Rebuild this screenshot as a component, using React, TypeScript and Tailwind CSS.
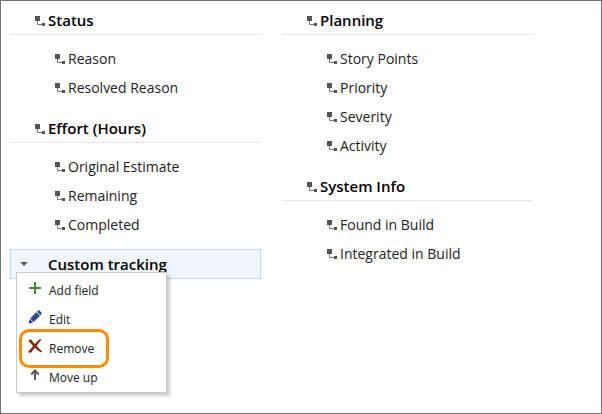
import React from "react";

function FieldIcon() {
  return (
    <svg width="10" height="10" viewBox="0 0 10 10" className="mt-px shrink-0" aria-hidden="true">
      <path d="M0 0h5v5H0z M7 7h3v3H7z" fill="#555555" />
      <path d="M2.5 5v3.500H7" fill="none" stroke="#777777" />
    </svg>
  );
}

function Group({ title, fields }: { title: string; fields: string[] }) {
  return (
    <section className="mb-3">
      <h2 className="flex h-7 items-center gap-[3px] border-b border-[#e6e6e6] pl-[25px] text-[15px] font-semibold text-black">
        <FieldIcon />
        {title}
      </h2>
      <ul className="pb-px pt-[9px]">
        {fields.map((field) => (
          <li key={field} className="flex h-[29px] items-center gap-[3px] pl-[45px] text-sm text-[#222222]">
            <FieldIcon />
            {field}
          </li>
        ))}
      </ul>
    </section>
  );
}

const addIcon = (
  <svg width="14" height="14" viewBox="0 0 14 14" aria-hidden="true">
    <path d="M7 1v12M1 7h12" stroke="#42852c" strokeWidth="2" />
  </svg>
);

const editIcon = (
  <svg width="14" height="14" viewBox="0 0 14 14" aria-hidden="true">
    <path d="M0.500 13.500L1.700 9l3.500 3.400z M2.200 8.400L8.400 2.200l3.600 3.600-6.300 6.100z M9 1.700l1.200-1.100q.7-.6 1.400 0l1.800 1.800q.6.700 0 1.400L12.500 5.200z" fill="#28479a" />
  </svg>
);

const removeIcon = (
  <svg width="14" height="14" viewBox="0 0 14 14" aria-hidden="true">
    <path d="M0.5 2Q1.500 0 3.300.700Q4.800 3 7 5Q9.300 2.200 12 0L13.400.700Q10.800 3.500 8.800 6.700Q10.800 9.500 14 12.200L12.900 13.500Q9.500 11.300 6.900 8.800Q4.800 11.200 3 13.700Q1.200 14 .100 12.700Q3 9.800 5 6.900Q3 4.600.500 2z" fill="#7e2a10" />
  </svg>
);

const moveUpIcon = (
  <svg width="14" height="14" viewBox="0 0 14 14" aria-hidden="true">
    <path d="M7 12V3M3.300 6.500L7 2.500l3.700 4" fill="none" stroke="#5c5c5c" strokeWidth="2" />
  </svg>
);

const actions = [
  { label: "Add field", icon: addIcon },
  { label: "Edit", icon: editIcon },
  { label: "Remove", icon: removeIcon, marked: true },
  { label: "Move up", icon: moveUpIcon },
];

function ContextMenu() {
  return (
    <div
      role="menu"
      className="absolute left-[6px] top-[23px] z-10 w-[151px] border border-[#c8c8c8] bg-white pt-[3px] shadow-[3px_3px_3px_rgba(0,0,0,0.2)]"
    >
      {actions.map(({ label, icon, marked }) => (
        <button
          key={label}
          type="button"
          role="menuitem"
          className="relative flex h-[29px] w-full items-center gap-[7px] pl-[11px] text-left text-xs text-[#222222]"
        >
          <span className="pb-1.5">{icon}</span>
          {label}
          {marked && (
            <span className="absolute -inset-y-[5px] left-[2px] w-[90px] rounded-[10px] border-3 border-[#ff8c00]" />
          )}
        </button>
      ))}
    </div>
  );
}

export default function App() {
  return (
    <main className="flex min-h-screen items-start gap-[21px] border border-[#767173] bg-white pl-[9px] pr-[68px] pt-1.5 font-['Open_Sans','Noto_Sans',sans-serif]">
      <div className="min-w-0 flex-1">
        <Group title="Status" fields={["Reason", "Resolved Reason"]} />
        <Group title="Effort (Hours)" fields={["Original Estimate", "Remaining", "Completed"]} />
        <section className="relative -mt-[3px]">
          <h2 className="border border-[#b9d9fb] bg-[#f1f6fd] text-[15px] font-semibold text-black">
            <button type="button" aria-haspopup="menu" className="flex h-7 w-full items-center gap-5 pl-[9px] text-left">
              <svg width="8" height="4" viewBox="0 0 8 4" aria-hidden="true">
                <path d="M0 0h8L4 4z" fill="#5c5c5c" />
              </svg>
              Custom tracking
            </button>
          </h2>
          <ContextMenu />
        </section>
      </div>
      <div className="min-w-0 flex-1">
        <Group title="Planning" fields={["Story Points", "Priority", "Severity", "Activity"]} />
        <Group title="System Info" fields={["Found in Build", "Integrated in Build"]} />
      </div>
    </main>
  );
}
